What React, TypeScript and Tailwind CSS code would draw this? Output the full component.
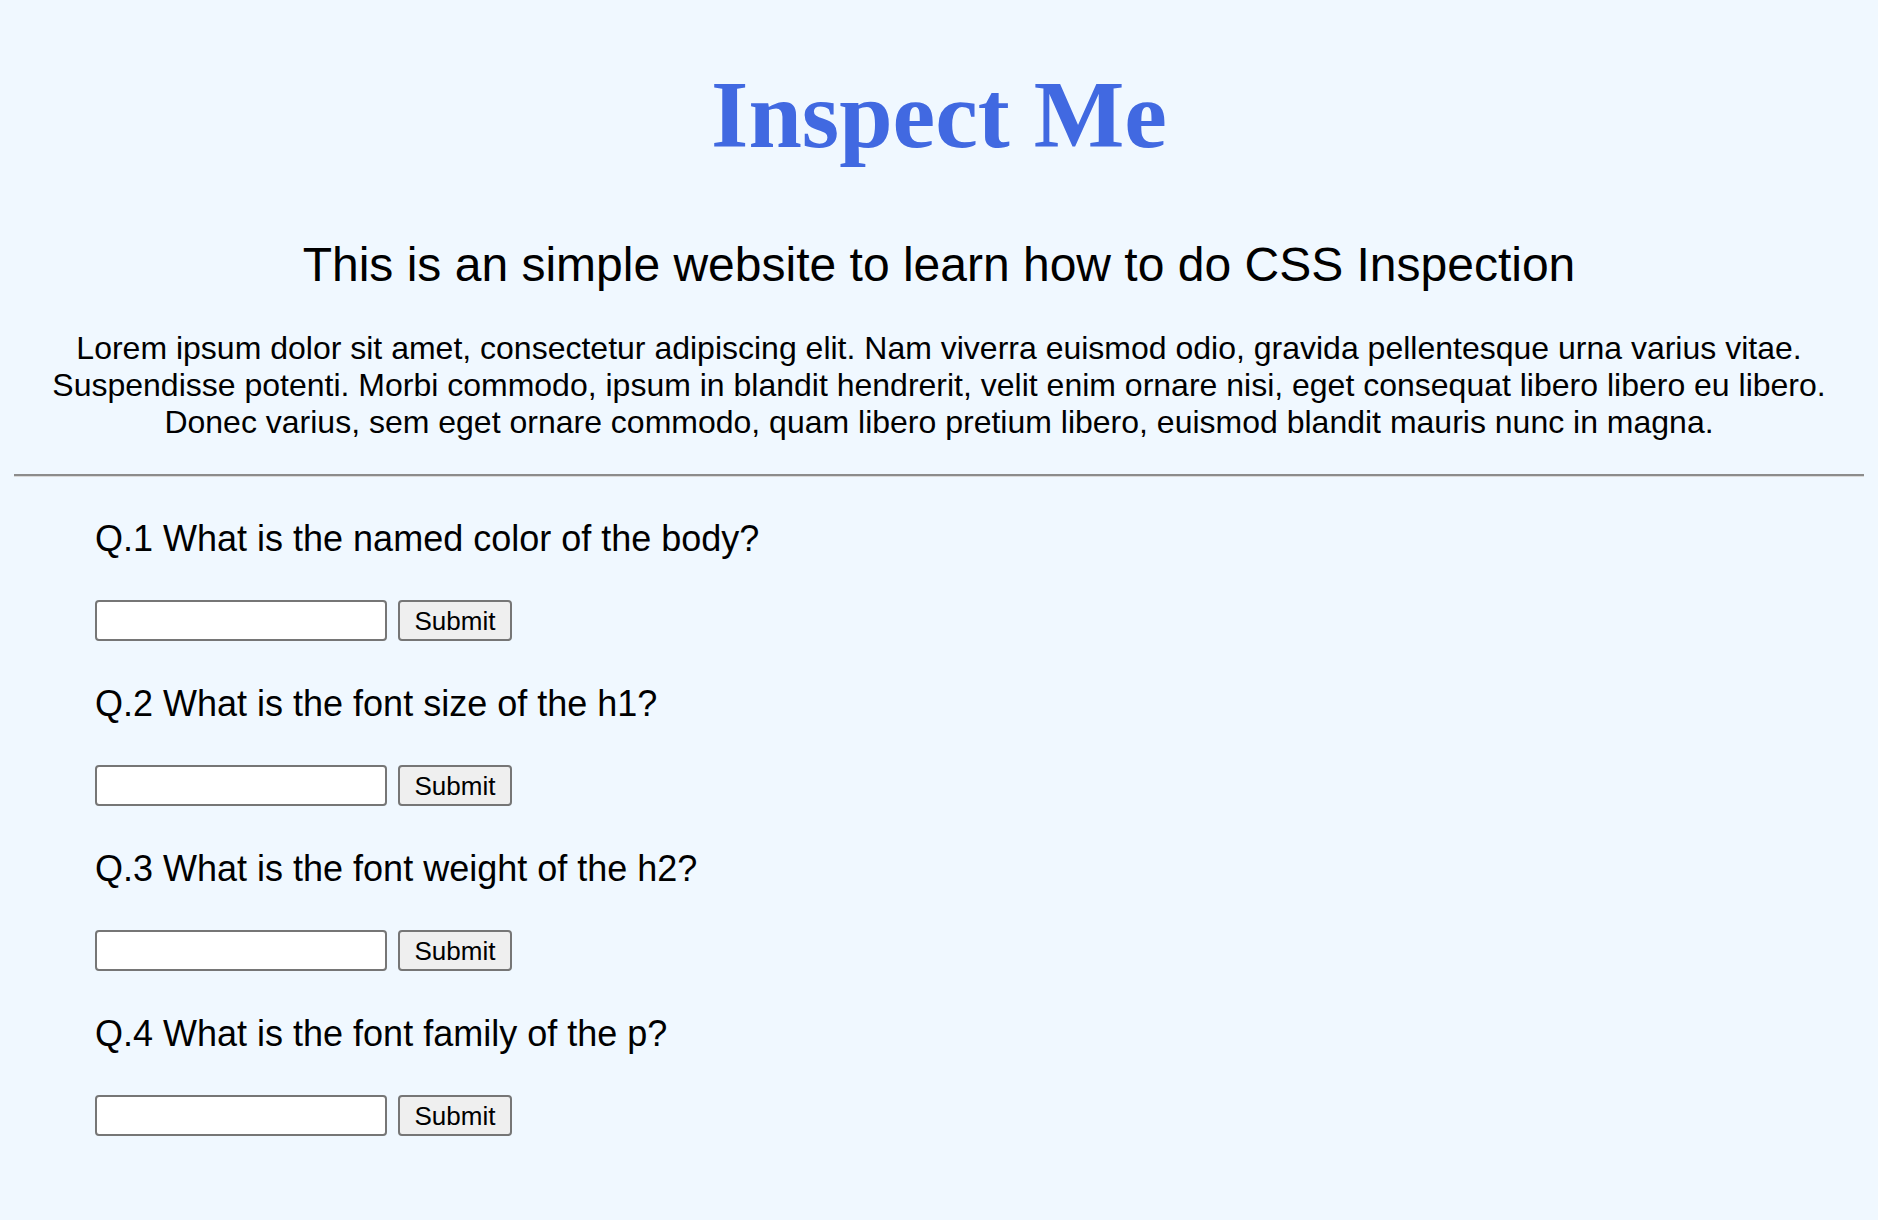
import React from "react";

const questions = [
  "Q.1 What is the named color of the body?",
  "Q.2 What is the font size of the h1?",
  "Q.3 What is the font weight of the h2?",
  "Q.4 What is the font family of the p?",
];

export default function App() {
  return (
    <div className="min-h-[1220px] bg-[#F0F8FF] px-[14px] pt-[60px] pb-[40px] text-black font-['Liberation_Sans',Arial,sans-serif]">
      <h1 className="text-center font-['Liberation_Serif','Times_New_Roman',serif] font-bold text-[96px] leading-[110px] text-[#4169E1]">
        Inspect Me
      </h1>
      <h2 className="mt-[67px] text-center text-[48px] leading-[55px] font-normal">
        This is an simple website to learn how to do CSS Inspection
      </h2>
      <p className="mt-[38px] text-center text-[32px] leading-[37px]">
        Lorem ipsum dolor sit amet, consectetur adipiscing elit. Nam viverra euismod odio, gravida pellentesque urna varius vitae.
        <br />
        Suspendisse potenti. Morbi commodo, ipsum in blandit hendrerit, velit enim ornare nisi, eget consequat libero libero eu libero.
        <br />
        Donec varius, sem eget ornare commodo, quam libero pretium libero, euismod blandit mauris nunc in magna.
      </p>
      <div className="mt-[33px] h-[3px] border-t-2 border-b border-t-[#8c8c8c] border-b-[#d9d9d9]" />
      <div className="pl-[81px] pt-[41px] flex flex-col">
        {questions.map((q, i) => (
          <div key={i} className={i === 0 ? "flex flex-col" : "mt-[42px] flex flex-col"}>
            <div className="text-[36px] leading-[41px]">{q}</div>
            <div className="mt-[41px] flex items-center gap-[11px]">
              <input
                type="text"
                className="w-[292px] h-[41px] bg-white border-2 border-[#767676] rounded-[4px] px-2 text-[26px] outline-none"
              />
              <button className="w-[114px] h-[41px] bg-[#efefef] border-2 border-[#767676] rounded-[4px] text-[26px] leading-none text-black">
                Submit
              </button>
            </div>
          </div>
        ))}
      </div>
    </div>
  );
}
